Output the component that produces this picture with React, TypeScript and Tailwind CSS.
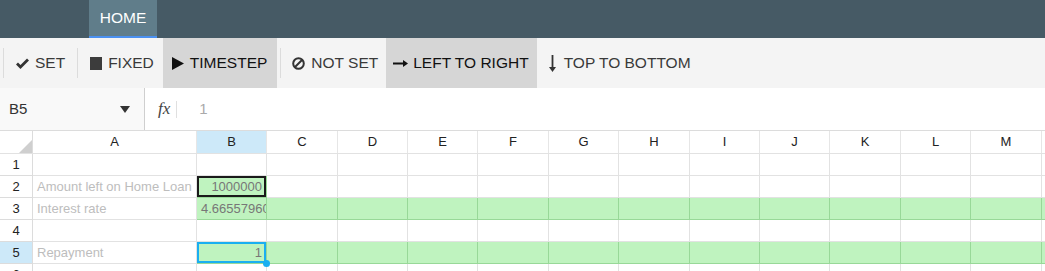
import React from 'react';

const font = { fontFamily: '"Liberation Sans", Arial, sans-serif' };

const columns = ['A', 'B', 'C', 'D', 'E', 'F', 'G', 'H', 'I', 'J', 'K', 'L', 'M', 'N'];
const colWidths = ['w-[164px]', 'w-[70px]', 'w-[71px]', 'w-[70px]', 'w-[70px]', 'w-[71px]', 'w-[70px]', 'w-[71px]', 'w-[70px]', 'w-[70px]', 'w-[71px]', 'w-[70px]', 'w-[71px]', 'w-[70px]'];

type Cell = { text?: string; align?: 'left' | 'right'; kind?: 'label' | 'value' };
type Row = { n: number; green?: boolean; cells: Record<string, Cell> };

const rows: Row[] = [
  { n: 1, cells: {} },
  { n: 2, cells: { A: { text: 'Amount left on Home Loan', kind: 'label' }, B: { text: '1000000', align: 'right', kind: 'value' } } },
  { n: 3, green: true, cells: { A: { text: 'Interest rate', kind: 'label' }, B: { text: '4.66557960', kind: 'value' } } },
  { n: 4, cells: {} },
  { n: 5, green: true, cells: { A: { text: 'Repayment', kind: 'label' }, B: { text: '1', align: 'right', kind: 'value' } } },
  { n: 6, cells: {} },
];

const CheckIcon = () => (
  <svg width="13" height="12" viewBox="0 0 13 12"><path d="M1 6.5 L4.5 10 L12 2.5" fill="none" stroke="#333" strokeWidth="2.8" /></svg>
);
const SquareIcon = () => <span className="inline-block w-[12px] h-[13px] bg-[#3c3c3c]" />;
const PlayIcon = () => (
  <svg width="12" height="13" viewBox="0 0 12 13"><path d="M0 0 L12 6.5 L0 13 Z" fill="#111" /></svg>
);
const BanIcon = () => (
  <svg width="13" height="13" viewBox="0 0 13 13"><circle cx="6.5" cy="6.5" r="5.3" fill="none" stroke="#333" strokeWidth="2" /><path d="M3 10 L10 3" stroke="#333" strokeWidth="2" /></svg>
);
const RightArrow = () => (
  <svg width="15" height="9" viewBox="0 0 15 9"><path d="M0 4.5 H11" stroke="#111" strokeWidth="2" /><path d="M10 1 L15 4.5 L10 8 Z" fill="#111" /></svg>
);
const DownArrow = () => (
  <svg width="7" height="17" viewBox="0 0 7 17"><path d="M3.5 0 V13" stroke="#333" strokeWidth="1.8" /><path d="M0 12 L3.5 17 L7 12 Z" fill="#333" /></svg>
);

const Sep = () => <div className="w-px h-[30px] bg-[#dcdcdc]" />;

export default function App() {
  return (
    <div className="w-[1045px] h-[271px] overflow-hidden bg-white" style={font}>
      {/* Top ribbon tabs */}
      <div className="h-[38px] bg-[#465a65] flex pl-[89px]">
        <div className="w-[68px] h-full bg-[#607d8a] border-b-2 border-[#4a90f0] flex items-center justify-center text-white text-[15.5px]">
          HOME
        </div>
      </div>

      {/* Toolbar */}
      <div className="h-[50px] bg-[#f4f4f4] flex items-center pl-[3px] text-[15.5px]">
        <Sep />
        <div className="h-full flex items-center gap-[6px] pl-[12px] pr-[12px] text-[#3a3a3a]">
          <CheckIcon />
          <span>SET</span>
        </div>
        <Sep />
        <div className="h-full flex items-center gap-[6px] pl-[12px] pr-[9px] text-[#3a3a3a]">
          <SquareIcon />
          <span>FIXED</span>
        </div>
        <div className="h-full flex items-center gap-[6px] pl-[9px] pr-[10px] bg-[#d6d6d6] text-[#111]">
          <PlayIcon />
          <span>TIMESTEP</span>
        </div>
        <div className="w-[3px]" />
        <Sep />
        <div className="h-full flex items-center gap-[6px] pl-[11px] pr-[8px] text-[#3a3a3a]">
          <BanIcon />
          <span>NOT SET</span>
        </div>
        <div className="h-full flex items-center gap-[5px] pl-[7px] pr-[8px] bg-[#d6d6d6] text-[#111]">
          <RightArrow />
          <span>LEFT TO RIGHT</span>
        </div>
        <div className="h-full flex items-center gap-[8px] pl-[12px] text-[#3a3a3a]">
          <DownArrow />
          <span>TOP TO BOTTOM</span>
        </div>
      </div>

      {/* Formula bar */}
      <div className="h-[43px] flex border-b border-[#dcdcdc]">
        <div className="w-[145px] bg-[#f9f9f9] border-r border-[#cfcfcf] flex items-center justify-between pl-[9px] pr-[14px] text-[15px] text-[#333]">
          <span>B5</span>
          <svg width="10" height="7" viewBox="0 0 10 7"><path d="M0 0 H10 L5 7 Z" fill="#333" /></svg>
        </div>
        <div className="flex-1 flex items-center pl-[13px]">
          <span className="italic text-[17px] text-[#444]" style={{ fontFamily: '"Liberation Serif", serif' }}>fx</span>
          <div className="w-px h-[17px] bg-[#e0e0e0] ml-[6px]" />
          <span className="ml-[22px] text-[15px] text-[#aaa]">1</span>
        </div>
      </div>

      {/* Column header */}
      <div className="flex h-[23px] border-b border-[#e2e2e2]">
        <div className="w-[33px] shrink-0 border-r border-[#dcdcdc] relative">
          <div className="absolute right-0 bottom-0 w-0 h-0 border-l-[13px] border-l-transparent border-b-[13px] border-b-[#cfcfcf]" />
        </div>
        {columns.map((c, i) => (
          <div
            key={c}
            className={`${colWidths[i]} shrink-0 border-r border-[#e6e6e6] flex items-center justify-center text-[13px] text-[#222] ${c === 'B' ? 'bg-[#cde9f9]' : ''}`}
          >
            {c}
          </div>
        ))}
      </div>

      {/* Rows */}
      {rows.map((row) => (
        <div key={row.n} className="flex h-[22px]">
          <div className={`w-[33px] shrink-0 border-r border-b border-[#dcdcdc] flex items-center justify-center text-[13px] text-[#222] ${row.n === 5 ? 'bg-[#cde9f9]' : ''}`}>
            {row.n}
          </div>
          {columns.map((c, i) => {
            const cell = row.cells[c];
            const isB2 = row.n === 2 && c === 'B';
            const isB5 = row.n === 5 && c === 'B';
            const greenCell = (row.green && c !== 'A') || isB2;
            return (
              <div
                key={c}
                className={`${colWidths[i]} shrink-0 relative flex items-center overflow-hidden whitespace-nowrap text-[13px] px-[4px] ${
                  greenCell ? 'bg-[#bff3bf] border-r border-b border-[#98d898]' : 'border-r border-b border-[#e2e2e2]'
                } ${isB2 ? 'shadow-[inset_0_0_0_2px_#1a1a1a]' : ''} ${isB5 ? 'bg-[#a9ebc2] shadow-[inset_0_0_0_2px_#1aaff0] overflow-visible' : ''} ${
                  cell?.align === 'right' ? 'justify-end' : 'justify-start'
                } ${cell?.kind === 'label' ? 'text-[#bdbdbd]' : 'text-[#777]'}`}
              >
                {cell?.text}
                {isB5 && <span className="absolute right-[-4px] bottom-[-4px] w-[7px] h-[7px] rounded-full bg-[#1aaff0] z-10" />}
              </div>
            );
          })}
        </div>
      ))}
    </div>
  );
}
